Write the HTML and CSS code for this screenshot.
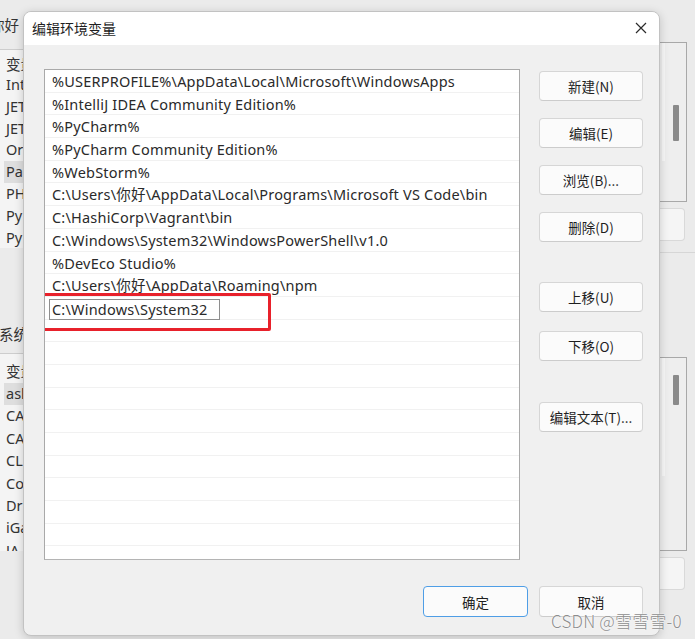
FILE: index.html
```html
<!DOCTYPE html>
<html lang="zh-CN">
<head>
<meta charset="utf-8">
<title>编辑环境变量</title>
<link rel="stylesheet" href="styles.css">
</head>
<body>
<div class="bgwin">
  <div class="bg-left">
    <div class="bg-label">你好</div>
    <div class="bg-list bg-list-user">
      <div class="bg-head">变量</div>
      <div class="bg-row">Int</div>
      <div class="bg-row">JET</div>
      <div class="bg-row">JET</div>
      <div class="bg-row">Or</div>
      <div class="bg-row sel">Pa</div>
      <div class="bg-row">PH</div>
      <div class="bg-row">Py</div>
      <div class="bg-row">Py</div>
    </div>
    <div class="bg-label bg-label-sys">系统变</div>
    <div class="bg-list bg-list-sys">
      <div class="bg-head">变量</div>
      <div class="bg-row sel">asl</div>
      <div class="bg-row">CA</div>
      <div class="bg-row">CA</div>
      <div class="bg-row">CL</div>
      <div class="bg-row">Co</div>
      <div class="bg-row">Dr</div>
      <div class="bg-row">iGa</div>
      <div class="bg-row">JA</div>
    </div>
  </div>
  <div class="bg-right">
    <div class="bg-box bg-box-1"><span class="bg-track"></span><span class="bg-thumb"></span></div>
    <div class="bg-btn"></div>
    <div class="bg-sep"></div>
    <div class="bg-box bg-box-2"><span class="bg-track"></span><span class="bg-thumb"></span></div>
    <div class="bg-btn"></div>
  </div>
</div>

<div class="dialog">
  <div class="titlebar">
    <span class="title">编辑环境变量</span>
    <svg class="close" width="12" height="12" viewBox="0 0 12 12" aria-hidden="true">
      <path d="M1 1 L11 11 M11 1 L1 11" stroke="#2b2b2b" stroke-width="1.2" fill="none"/>
    </svg>
  </div>
  <div class="main">
    <div class="list">
      <div class="row">%USERPROFILE%\AppData\Local\Microsoft\WindowsApps</div>
      <div class="row">%IntelliJ IDEA Community Edition%</div>
      <div class="row">%PyCharm%</div>
      <div class="row">%PyCharm Community Edition%</div>
      <div class="row">%WebStorm%</div>
      <div class="row">C:\Users\你好\AppData\Local\Programs\Microsoft VS Code\bin</div>
      <div class="row">C:\HashiCorp\Vagrant\bin</div>
      <div class="row">C:\Windows\System32\WindowsPowerShell\v1.0</div>
      <div class="row">%DevEco Studio%</div>
      <div class="row">C:\Users\你好\AppData\Roaming\npm</div>
      <div class="row row-edit"><span class="edit-box">C:\Windows\System32</span></div>
      <div class="row"></div>
      <div class="row"></div>
      <div class="row"></div>
      <div class="row"></div>
      <div class="row"></div>
      <div class="row"></div>
      <div class="row"></div>
      <div class="row"></div>
      <div class="row"></div>
      <div class="row"></div>
      <div class="row"></div>
      <div class="highlight"></div>
    </div>
    <div class="side">
      <button class="btn">新建(N)</button>
      <button class="btn">编辑(E)</button>
      <button class="btn">浏览(B)...</button>
      <button class="btn">删除(D)</button>
      <button class="btn">上移(U)</button>
      <button class="btn">下移(O)</button>
      <button class="btn">编辑文本(T)...</button>
    </div>
  </div>
  <div class="footer">
    <button class="btn btn-default">确定</button>
    <button class="btn">取消</button>
  </div>
</div>

<div class="watermark">CSDN @雪雪雪-0</div>
</body>
</html>
```

FILE: styles.css
```css
* { box-sizing: border-box; }

html, body {
  margin: 0;
  padding: 0;
}

body {
  width: 695px;
  height: 639px;
  overflow: hidden;
  position: relative;
  background: #ececec;
  font-family: "Noto Sans", "Noto Sans CJK SC", sans-serif;
  color: #2a2a2a;
}

/* ---------- background window ---------- */
.bgwin {
  display: flex;
  justify-content: space-between;
  height: 639px;
  background: #ebebeb;
}

.bg-left {
  width: 23px;
  overflow: hidden;
  white-space: nowrap;
  font-size: 14.5px;
  color: #333;
}

.bg-label {
  height: 50px;
  padding-top: 14px;
  margin-left: -10px;
  font-family: "Noto Sans CJK SC", sans-serif;
  font-size: 14.5px;
  line-height: 22px;
  border-bottom: 1px solid #cdcdcd;
}

.bg-label-sys {
  height: 34px;
  padding-top: 3px;
  margin-left: -1px;
}

.bg-list {
  background: #f4f4f4;
  padding-left: 4px;
  overflow: hidden;
}

.bg-list-user {
  height: 198px;
  margin-bottom: 72px;
}

.bg-list-sys {
  height: 197px;
}

.bg-head {
  height: 24px;
  padding: 5px 0 0 2px;
  font-family: "Noto Sans CJK SC", sans-serif;
  line-height: 18px;
  overflow: hidden;
}

.bg-list-sys .bg-head {
  height: 29px;
  padding-top: 8px;
}

.bg-row {
  height: 21.8px;
  line-height: 21px;
  padding-left: 2px;
}

.bg-list-sys .bg-row {
  height: 22.4px;
}

.bg-row.sel {
  background: #dedede;
}

.bg-right {
  width: 35px;
  padding-top: 42px;
}

.bg-box {
  position: relative;
  width: 27px;
  background: #eeeeee;
  border: 1px solid #a8a8a8;
  border-left: none;
}

.bg-box-1 { height: 160px; }
.bg-box-2 { height: 194px; }

.bg-track {
  position: absolute;
  left: 2px;
  top: 0;
  width: 3px;
  height: 118px;
  background: #f7f7f7;
}

.bg-thumb {
  position: absolute;
  left: 13px;
  width: 6px;
  background: #8a8a8a;
  border-radius: 1px;
}

.bg-box-1 .bg-thumb { top: 62px; height: 36px; }
.bg-box-2 .bg-thumb { top: 17px; height: 30px; }

.bg-btn {
  width: 25px;
  height: 33px;
  margin-top: 6px;
  background: #f5f5f5;
  border: 1px solid #d9d9d9;
  border-left: none;
  border-radius: 0 4px 4px 0;
}

.bg-sep {
  height: 1px;
  margin-top: 11px;
  margin-bottom: 104px;
  background: #d6d6d6;
}

/* ---------- dialog ---------- */
.dialog {
  position: absolute;
  left: 23px;
  top: 11px;
  width: 637px;
  height: 625px;
  background: #f0f0f0;
  border: 1px solid #c2c2c2;
  border-radius: 8px;
  box-shadow: 0 2px 10px rgba(0, 0, 0, 0.18);
  display: flex;
  flex-direction: column;
  overflow: hidden;
}

.titlebar {
  height: 33px;
  background: #ffffff;
  display: flex;
  align-items: center;
  justify-content: space-between;
  padding: 0 12px 2px 8px;
}

.title {
  font-family: "Noto Sans CJK SC", sans-serif;
  font-size: 14px;
  color: #1f1f1f;
}

.close {
  display: block;
}

.main {
  display: flex;
  padding: 24px 16px 0 20px;
}

.list {
  position: relative;
  width: 476px;
  height: 491px;
  background: #ffffff;
  border: 1px solid #a9a9a9;
  border-bottom-color: #b4b4b4;
  overflow: hidden;
}

.row {
  height: 22.7px;
  line-height: 22px;
  padding-left: 7px;
  font-size: 14.5px;
  letter-spacing: 0.2px;
  color: #2a2a2a;
  white-space: nowrap;
  border-bottom: 1px solid #f1f1f1;
}

.row-edit {
  padding-left: 4px;
  padding-top: 2px;
  line-height: normal;
}

.edit-box {
  display: block;
  width: 171px;
  height: 21px;
  line-height: 19px;
  padding-left: 2px;
  border: 1px solid #8e8e8e;
  background: #fff;
  font-size: 14.5px;
}

.highlight {
  position: absolute;
  left: -5px;
  top: 223px;
  width: 231px;
  height: 38px;
  border: 3px solid #e8212b;
  border-radius: 2px;
}

.side {
  display: flex;
  flex-direction: column;
  gap: 17px;
  margin-left: 19px;
  padding-top: 2px;
}

.btn {
  width: 104px;
  height: 30px;
  padding: 0;
  background: #fbfbfb;
  border: 1px solid #d6d6d6;
  border-bottom-color: #cccccc;
  border-radius: 4px;
  font-family: "Noto Sans CJK SC", sans-serif;
  font-size: 13.5px;
  color: #1f1f1f;
}

.side .btn:nth-child(5) {
  margin-top: 23px;
}

.side .btn:nth-child(6) {
  margin-top: 2px;
}

.side .btn:nth-child(7) {
  margin-top: 24px;
}

.footer {
  display: flex;
  justify-content: flex-end;
  gap: 11px;
  padding: 0 16px 0 0;
  margin-top: 26px;
}

.footer .btn {
  height: 31px;
}

.btn-default {
  width: 105px;
  border: 1.5px solid #4f9ee6;
}

/* ---------- watermark ---------- */
.watermark {
  position: absolute;
  left: 551px;
  top: 608px;
  font-family: "Noto Sans CJK SC", sans-serif;
  font-weight: 300;
  font-size: 17px;
  color: #8d8d8d;
  text-shadow: 0 0 2px #ffffff, 0 0 1px #ffffff;
  white-space: nowrap;
  letter-spacing: 0.2px;
}
```
